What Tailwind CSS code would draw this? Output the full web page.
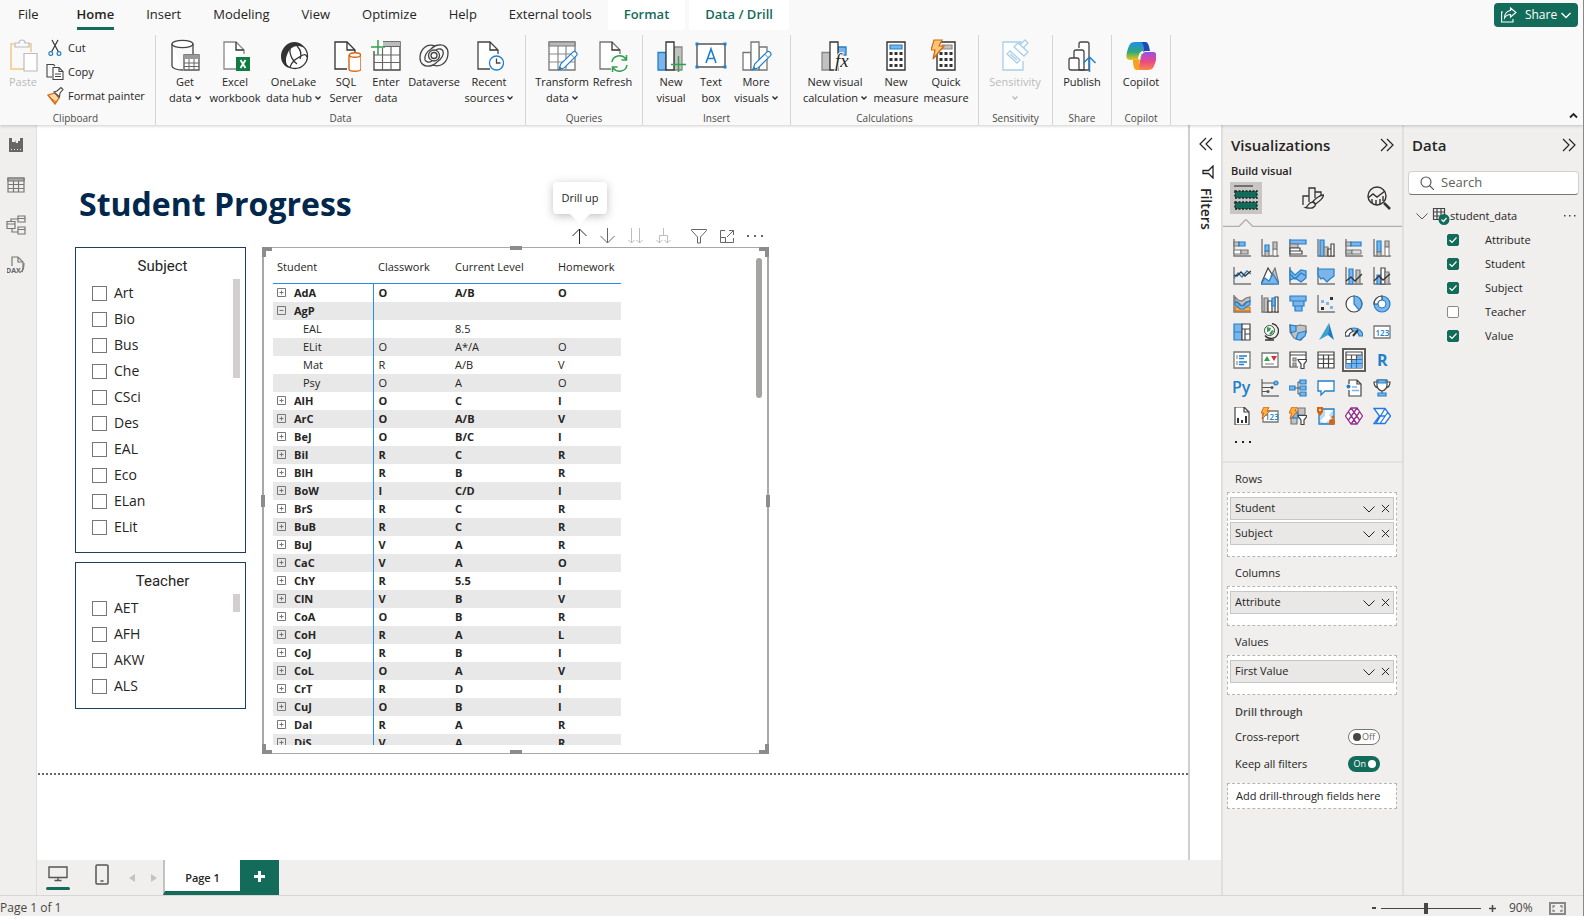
<!DOCTYPE html>
<html lang="en">
<head>
    <meta charset="UTF-8">
    <meta name="viewport" content="width=device-width, initial-scale=1.0">
    <title>Student Progress</title>
    <script src="https://cdn.jsdelivr.net/npm/@tailwindcss/browser@4"></script>
</head>
<body class="h-screen flex flex-col overflow-hidden bg-[#f0efee] font-['Open_Sans','Noto_Sans',sans-serif] text-[11px] text-[#252423] border-r border-[#8a8886]">
    <!-- Shared glyphs -->
    <svg class="hidden">
        <symbol id="chev" viewBox="0 0 12 12"><path d="M0.5 3.5 6 9l5.500-5.500" fill="none" stroke="currentColor" /></symbol>
        <symbol id="cross" viewBox="0 0 10 10"><path d="M1 1l8 8M9 1 1 9" fill="none" stroke="currentColor" stroke-width="1.100" /></symbol>
        <symbol id="caret" viewBox="0 0 6 6"><path d="M0.500 1.500 3 4l2.500-2.500" fill="none" stroke="currentColor" stroke-width="1.300" /></symbol>
        <symbol id="dbl" viewBox="0 0 14 14"><path d="M1 1l6 6-6 6M7 1l6 6-6 6" fill="none" stroke="currentColor" stroke-width="1.200" /></symbol>
        <symbol id="doc" viewBox="0 0 30 32"><path d="M22 16v-4l-8-8H2v27h12" fill="#fff" stroke="currentColor" stroke-width="1.300" /><path d="M14 4v8h8" fill="none" stroke="#333" stroke-width="1.300" /></symbol>
        <symbol id="pencil" viewBox="0 0 22 22"><path d="M1 21l2-6L16 2q2-2 4 0t0 4L7 19z" fill="#fff" stroke="#2180c8" stroke-width="1.300" /><path d="M1 21l1-3 2 2zM14 4l4 4" fill="#2180c8" stroke="#2180c8" /></symbol>
    </svg>

    <!-- Ribbon -->
    <header class="relative z-10 bg-[#f9f9f9] shadow-[0_1px_3px_rgba(0,0,0,0.2)] h-[125px] shrink-0 flex flex-col">
        <nav class="flex items-stretch h-[30px] text-[13px] text-[#252423]">
            <a href="#" class="pl-[18px] pr-[22px] flex items-center">File</a>
            <a href="#" class="px-4 flex items-center font-semibold"><span class="relative h-full flex items-center">Home<span class="absolute inset-x-0 bottom-0 h-[3px] bg-[#136c5a]"></span></span></a>
            <a href="#" class="px-4 flex items-center">Insert</a>
            <a href="#" class="px-4 flex items-center">Modeling</a>
            <a href="#" class="px-4 flex items-center">View</a>
            <a href="#" class="px-4 flex items-center">Optimize</a>
            <a href="#" class="px-4 flex items-center">Help</a>
            <a href="#" class="px-4 flex items-center">External tools</a>
            <a href="#" class="px-4 flex items-center font-semibold text-[#136c5a] bg-white">Format</a>
            <a href="#" class="px-4 ml-1 flex items-center font-semibold text-[#136c5a] bg-white">Data / Drill</a>
            <button class="ml-auto mr-[5px] mt-[3px] h-6 w-[84px] rounded bg-[#136c5a] text-white text-xs flex items-center justify-center gap-2">
                <svg class="w-4 h-4" viewBox="0 0 16 16" fill="none" stroke="currentColor" stroke-width="1.100"><path d="M2 5H.600v10H12v-3" /><path d="M9.500 1l5.500 4.500-5.500 4.500V7.500C7 7.500 5 8.500 3.500 11 3.500 7 6 4 9.500 3.500z" /></svg>
                <span class="flex items-center gap-1">Share<svg class="w-[10px] h-[10px]" viewBox="0 0 10 10"><path d="M.500 3 5 7.500 9.500 3" fill="none" stroke="currentColor" stroke-width="1.300" /></svg></span>
            </button>
        </nav>

        <div class="flex pt-[5px] flex-1 relative">
            <!-- Clipboard -->
            <section class="w-[156px] border-r border-[#d6d5d4] flex flex-col">
                <div class="flex flex-1 -mt-px">
                    <button class="w-[46px] flex flex-col items-center text-[#bab9b8] leading-4" disabled>
                        <svg class="w-[30px] h-10 shrink-0" viewBox="0 0 30 40"><path d="M6 10H3v25h13M19 10h4v8" fill="none" stroke="#f6d3a4" stroke-width="2" /><path d="M7 13V9h4c0-4 6-4 6 0h4v4z" fill="#f9f9f9" stroke="#bbb" stroke-width="1.200" /><path d="M16 19.500h13V37H16z" fill="#fff" stroke="#bbb" stroke-width="1.200" /></svg>
                        Paste
                    </button>
                    <div class="flex flex-col pt-[2px]">
                        <button class="flex items-center h-6 gap-1 text-left">
                            <svg class="w-[18px] h-[18px]" viewBox="0 0 18 18" fill="none"><path d="M6 1l6.500 12M12 1 5.500 13" stroke="#333" stroke-width="1.200" /><circle cx="4.800" cy="14.500" r="1.900" stroke="#2180c8" stroke-width="1.200" /><circle cx="13" cy="14.500" r="1.900" stroke="#2180c8" stroke-width="1.200" /></svg>Cut
                        </button>
                        <button class="flex items-center h-6 gap-1 text-left">
                            <svg class="w-[18px] h-[18px]" viewBox="0 0 18 18" fill="none" stroke="#444" stroke-width="1.100"><path d="M6 14H1V1.500h6.500L9 3" /><path d="M7 4.500h6l4 4v8H7z" fill="#fff" /><path d="M13 4.500v4h4M9 11h6M9 13.500h6" /></svg>Copy
                        </button>
                        <button class="flex items-center h-6 gap-1 text-left">
                            <svg class="w-[18px] h-[18px]" viewBox="0 0 18 18"><path d="M2 8l7-2 4 5-4 6z" fill="#fbd9a5" stroke="#d9640f" stroke-width="1.300" /><path d="M3 10l7 5" stroke="#d9640f" /><path d="M8 5l3-1 4-3.500 2 2L14 6l-.500 4z" fill="#fff" stroke="#444" stroke-width="1.100" /></svg>Format painter
                        </button>
                    </div>
                </div>
                <div class="text-center text-[10px] leading-[14px] text-[#4a4947] -ml-1">Clipboard</div>
            </section>

            <!-- Data -->
            <section class="border-r border-[#d6d5d4] flex flex-col">
                <div class="flex flex-1 leading-4 -mt-px pl-[5px] pr-[9px]">
                    <button class="w-12 flex flex-col items-center whitespace-nowrap">
                        <svg class="w-[30px] h-10 shrink-0" viewBox="0 0 30 40"><path d="M2 10v22c0 2 4 4 11 4M23 20V10" fill="#fff" stroke="#444" stroke-width="1.300" /><ellipse cx="12.500" cy="10" rx="10.500" ry="3.700" fill="#fff" stroke="#444" stroke-width="1.300" /><path d="M14 21h15v15H14z" fill="#fff" stroke="#555" stroke-width="1.300" /><path d="M14 21h15v4H14z" fill="#999" /><path d="M14 29h15M14 32.500h15M19 25v11M24 25v11" stroke="#666" /></svg>
                        Get<span class="flex items-center gap-[3px]">data<svg class="w-[6px] h-[6px]"><use href="#caret" /></svg></span>
                    </button>
                    <button class="w-[52px] flex flex-col items-center whitespace-nowrap">
                        <svg class="w-[30px] h-10 shrink-0 text-[#888]" viewBox="0 0 30 40"><use href="#doc" x="2" y="4" width="30" height="32" /><path d="M16 23h14v14H16z" fill="#107c41" /><path d="M20.500 26l5 8M25.500 26l-5 8" stroke="#fff" stroke-width="1.800" /></svg>
                        Excel<span>workbook</span>
                    </button>
                    <button class="w-[65px] flex flex-col items-center whitespace-nowrap">
                        <svg class="w-[30px] h-10 shrink-0" viewBox="0 0 30 40"><circle cx="16" cy="22" r="12.500" fill="#fff" stroke="#333" stroke-width="1.300" /><path d="M16 8C7 8 2 16 2 22s3 10 8 12c-3-4-4-8-2-13 2-6 6-9 11-9 3 0 5 1 6 2-2-4-5-6-9-6z" fill="#333" /><path d="M11 15c-1 6 3 12 7 15M28 23c-1-3-3-3-6-1-5 3-8 4-11 11M18 12c3 3 5 8 3 13" fill="none" stroke="#333" stroke-width="1.300" /></svg>
                        OneLake<span class="flex items-center gap-[3px]">data hub<svg class="w-[6px] h-[6px]"><use href="#caret" /></svg></span>
                    </button>
                    <button class="w-10 flex flex-col items-center whitespace-nowrap">
                        <svg class="w-[30px] h-10 shrink-0 text-[#333]" viewBox="0 0 30 40"><use href="#doc" x="2" y="4" width="30" height="32" /><path d="M18 21v14c0 3 12 3 12 0V21" fill="#fff" stroke="#d9640f" stroke-width="1.400" /><ellipse cx="24" cy="21" rx="5.500" ry="2.200" fill="#fff" stroke="#d9640f" stroke-width="1.400" /></svg>
                        SQL<span>Server</span>
                    </button>
                    <button class="w-10 flex flex-col items-center whitespace-nowrap">
                        <svg class="w-[30px] h-10 shrink-0" viewBox="0 0 30 40"><path d="M3 17v19h26V8H12" fill="#fff" stroke="#444" stroke-width="1.300" /><path d="M12 8h17v4H12z" fill="#bbb" /><path d="M3 21h26M3 28.500h26M11.500 14v22M20 12v24M12 12.500h17" stroke="#666" stroke-width="1.200" fill="none" /><path d="M7 6v15M0 13h14" stroke="#31a04f" stroke-width="1.500" /></svg>
                        Enter<span>data</span>
                    </button>
                    <button class="w-14 flex flex-col items-center whitespace-nowrap">
                        <svg class="w-[30px] h-10 shrink-0" viewBox="0 0 30 40" fill="none" stroke="#444" stroke-width="1.300"><path d="M16 12C8 9 1 15 1 24c0 6 5 9 9 8 3 0 6-2 8-4" /><path d="M14 31c8 3 15-3 15-12 0-6-5-9-9-8-3 0-6 2-8 4" /><path d="M12 15c-5 3-7 8-6 11 1 2 4 3 7 1M18 28c5-3 7-8 6-11-1-2-4-3-7-1" /><circle cx="15" cy="21.500" r="5.500" /><circle cx="15" cy="21.500" r="3" /></svg>
                        Dataverse
                    </button>
                    <button class="w-[54px] flex flex-col items-center whitespace-nowrap">
                        <svg class="w-[30px] h-10 shrink-0 text-[#444]" viewBox="0 0 30 40"><use href="#doc" x="2" y="4" width="30" height="32" /><circle cx="22.500" cy="29" r="7" fill="#fff" stroke="#2180c8" stroke-width="1.300" /><path d="M22.500 24.500V29h4" fill="none" stroke="#444" stroke-width="1.300" /></svg>
                        Recent<span class="flex items-center gap-[3px]">sources<svg class="w-[6px] h-[6px]"><use href="#caret" /></svg></span>
                    </button>
                </div>
                <div class="text-center text-[10px] leading-[14px] text-[#4a4947]">Data</div>
            </section>

            <!-- Queries -->
            <section class="border-r border-[#d6d5d4] flex flex-col">
                <div class="flex flex-1 leading-4 -mt-px pl-[6px] pr-[9px]">
                    <button class="w-[60px] flex flex-col items-center whitespace-nowrap">
                        <svg class="w-8 h-10 shrink-0" viewBox="0 0 32 40"><path d="M3 8h26v28H3z" fill="#fff" stroke="#777" stroke-width="1.300" /><path d="M3 8h26v4H3z" fill="#bbb" stroke="#777" /><path d="M3 20h26M3 28h26M12 12v24M20 12v24" stroke="#888" stroke-width="1.200" /><use href="#pencil" x="12" y="16" width="20" height="21" /></svg>
                        Transform<span class="flex items-center gap-[3px]">data<svg class="w-[6px] h-[6px]"><use href="#caret" /></svg></span>
                    </button>
                    <button class="w-[41px] flex flex-col items-center whitespace-nowrap">
                        <svg class="w-[30px] h-10 shrink-0 text-[#777]" viewBox="0 0 30 40"><use href="#doc" y="4" width="30" height="32" /><path d="M13 21h17v17H13z" fill="#f9f9f9" /><path d="M14 28c1-7 10-8 14-3M28.500 21v5h-5M29 31c-1 7-10 8-14 3M14.500 38v-5h5" fill="none" stroke="#31a04f" stroke-width="1.500" /></svg>
                        Refresh
                    </button>
                </div>
                <div class="text-center text-[10px] leading-[14px] text-[#4a4947]">Queries</div>
            </section>

            <!-- Insert -->
            <section class="border-r border-[#d6d5d4] flex flex-col">
                <div class="flex flex-1 leading-4 -mt-px pl-2 pr-[9px]">
                    <button class="w-10 flex flex-col items-center whitespace-nowrap">
                        <svg class="w-[30px] h-10 shrink-0" viewBox="0 0 30 40"><path d="M2 18.500h8V36H2z" fill="#7db5ea" stroke="#2180c8" stroke-width="1.300" /><path d="M18 13h8v23h-8z" fill="#c4c2c0" stroke="#888" stroke-width="1.300" /><path d="M10 8h8v28h-8z" fill="#fff" stroke="#333" stroke-width="1.300" /><path d="M22.500 22v16M15 30.500h15" stroke="#31a04f" stroke-width="1.500" /></svg>
                        New<span>visual</span>
                    </button>
                    <button class="w-10 flex flex-col items-center whitespace-nowrap">
                        <svg class="w-8 h-10 shrink-0" viewBox="0 0 32 40"><path d="M2 10h28v23H2z" fill="#fff" stroke="#555" stroke-width="1.400" /><path d="M.500 8.500h3v3h-3zM28.500 8.500h3v3h-3zM.500 31.500h3v3h-3zM28.500 31.500h3v3h-3z" fill="#2180c8" /><path d="M11 29l5-14 5 14M12.500 24.500h7" fill="none" stroke="#2180c8" stroke-width="1.600" /></svg>
                        Text<span>box</span>
                    </button>
                    <button class="w-[50px] flex flex-col items-center whitespace-nowrap">
                        <svg class="w-8 h-10 shrink-0" viewBox="0 0 32 40"><path d="M3 18.500h8V36H3zM19 13h8v23h-8z" fill="#fff" stroke="#777" stroke-width="1.300" /><path d="M11 8h8v28h-8z" fill="#fff" stroke="#777" stroke-width="1.300" /><use href="#pencil" x="12" y="16" width="20" height="21" /></svg>
                        More<span class="flex items-center gap-[3px]">visuals<svg class="w-[6px] h-[6px]"><use href="#caret" /></svg></span>
                    </button>
                </div>
                <div class="text-center text-[10px] leading-[14px] text-[#4a4947]">Insert</div>
            </section>

            <!-- Calculations -->
            <section class="border-r border-[#d6d5d4] flex flex-col">
                <div class="flex flex-1 leading-4 -mt-px pl-[9px] pr-2">
                    <button class="w-[70px] flex flex-col items-center whitespace-nowrap">
                        <svg class="w-[30px] h-10 shrink-0" viewBox="0 0 30 40"><path d="M2 18.500h8V36H2z" fill="#c4c2c0" stroke="#888" stroke-width="1.300" /><path d="M18 13h8v8h-8z" fill="#7db5ea" stroke="#2180c8" stroke-width="1.300" /><path d="M10 8h8v28h-8z" fill="#fff" stroke="#333" stroke-width="1.300" /><text x="15" y="33" font-size="19" font-style="italic" font-family="Liberation Serif" fill="#252423" stroke="#fff" stroke-width="2" paint-order="stroke">fx</text></svg>
                        New visual<span class="flex items-center gap-[3px]">calculation<svg class="w-[6px] h-[6px]"><use href="#caret" /></svg></span>
                    </button>
                    <button class="w-[52px] flex flex-col items-center whitespace-nowrap">
                        <svg class="w-[30px] h-10 shrink-0" viewBox="0 0 30 40"><path d="M6 8h18v28H6z" fill="#fff" stroke="#333" stroke-width="1.400" /><path d="M9 11h12v4H9z" fill="#7db5ea" stroke="#2180c8" stroke-width="1.200" /><path d="M8.500 19.500h13M8.500 25.500h13M8.500 31.500h13" stroke="#333" stroke-width="3" stroke-dasharray="3 2" /></svg>
                        New<span>measure</span>
                    </button>
                    <button class="w-12 flex flex-col items-center whitespace-nowrap">
                        <svg class="w-[30px] h-10 shrink-0" viewBox="0 0 30 40"><path d="M6 8h18v28H6z" fill="#fff" stroke="#333" stroke-width="1.400" /><path d="M11 11h10v4H11z" fill="#c4c2c0" stroke="#888" stroke-width="1.200" /><path d="M8.500 19.500h13M8.500 25.500h13M8.500 31.500h13" stroke="#333" stroke-width="3" stroke-dasharray="3 2" /><path d="M3 6h8l-3 6h5L2 25l2-9H0z" fill="#fbc775" stroke="#d9640f" stroke-width="1.200" /></svg>
                        Quick<span>measure</span>
                    </button>
                </div>
                <div class="text-center text-[10px] leading-[14px] text-[#4a4947]">Calculations</div>
            </section>

            <!-- Sensitivity -->
            <section class="border-r border-[#d6d5d4] flex flex-col">
                <div class="flex flex-1 leading-4 -mt-px pl-[6px] pr-[7px]">
                    <button class="w-[60px] flex flex-col items-center text-[#bab9b8]" disabled>
                        <svg class="w-[30px] h-10 shrink-0" viewBox="0 0 30 40" fill="#fff" stroke="#a8d0ea" stroke-width="1.300"><path d="M21 18V8H3v28h20V27" /><path d="M7 20l3-3 10 9-3 3zM10 20l7 6" /><path d="M14 13l4-4 10 9-4 4zM18 9l3 1 4-4 3 3-4 4 1 3" /></svg>
                        Sensitivity<svg class="w-[6px] h-[6px] mt-[5px]"><use href="#caret" /></svg>
                    </button>
                </div>
                <div class="text-center text-[10px] leading-[14px] text-[#4a4947]">Sensitivity</div>
            </section>

            <!-- Share -->
            <section class="border-r border-[#d6d5d4] flex flex-col">
                <div class="flex flex-1 leading-4 -mt-px px-1">
                    <button class="w-[50px] flex flex-col items-center">
                        <svg class="w-[30px] h-10 shrink-0" viewBox="0 0 30 40" fill="#fff" stroke="#444" stroke-width="1.300"><path d="M12 14v-4q0-2 2-2h6q2 0 2 2v26H12" /><path d="M7 24v-6q0-2 2-2h6q2 0 2 2v18" /><path d="M2 26q0-2 2-2h6q2 0 2 2v10H4q-2 0-2-2zM12 36h6" /><path d="M22.500 38V23M16.500 29l6-6 6 6" fill="none" stroke="#2180c8" stroke-width="1.500" /></svg>
                        Publish
                    </button>
                </div>
                <div class="text-center text-[10px] leading-[14px] text-[#4a4947]">Share</div>
            </section>

            <!-- Copilot -->
            <section class="border-r border-[#d6d5d4] flex flex-col">
                <div class="flex flex-1 leading-4 -mt-px px-1">
                    <button class="w-[50px] flex flex-col items-center">
                        <svg class="w-[30px] h-10 shrink-0" viewBox="0 0 30 40">
                            <defs>
                                <linearGradient id="cpA" x1="0" y1="0" x2="0" y2="1"><stop offset="0" stop-color="#1f8df0" /><stop offset=".55" stop-color="#2fa878" /><stop offset="1" stop-color="#f0c419" /></linearGradient>
                                <linearGradient id="cpB" x1="0" y1="0" x2="0" y2="1"><stop offset="0" stop-color="#9a4fe8" /><stop offset=".55" stop-color="#ec4a84" /><stop offset="1" stop-color="#f9894a" /></linearGradient>
                            </defs>
                            <path d="M14 8h8c-4 0-4 5-5 9-2 8-3 9-7 9H4c-4 0-4-4-3-8 2-7 3-10 8-10z" fill="url(#cpA)" />
                            <path d="M16 36H9c4 0 4-5 5-9 2-8 3-9 7-9h6c4 0 4 4 3 8-2 7-3 10-8 10z" fill="url(#cpB)" />
                            <path d="M14 8h5c3 0 4 3 5 9h-3c-2 0-3 0-4 1 1-4 1-10-3-10z" fill="#1b49b8" />
                            <path d="M16 36h-5c-3 0-4-4-4-10h3c2 0 3 0 4-1-1 4-2 11 2 11z" fill="#f7a21b" />
                            <path d="M17 18q-3 0-4 7" fill="none" stroke="#fff" stroke-width="2" />
                        </svg>
                        Copilot
                    </button>
                </div>
                <div class="text-center text-[10px] leading-[14px] text-[#4a4947]">Copilot</div>
            </section>
            <button class="ml-auto self-end mr-[5px] mb-[5px]" aria-label="Collapse ribbon"><svg class="w-[9px] h-[9px]" viewBox="0 0 9 9"><path d="M1 6.500 4.500 3 8 6.500" fill="none" stroke="#252423" stroke-width="1.800" /></svg></button>
        </div>
    </header>

    <div class="flex flex-1 min-h-0">
        <!-- View switcher -->
        <nav class="w-[37px] shrink-0 border-r border-[#e1dfdd] flex flex-col text-[#777]">
            <button class="h-10 flex items-center justify-center pr-1" aria-label="Report view"><svg class="w-4 h-4" viewBox="0 0 16 16"><path d="M1 1h3v4h3V3l1 3h2V4h2V1h3v14H1z" fill="#666" /><path d="M3 12.500h10" stroke="#f0efee" stroke-dasharray="1 2" /></svg></button>
            <button class="h-10 flex items-center justify-center pr-1" aria-label="Table view"><svg class="w-[18px] h-[18px]" viewBox="0 0 18 18" fill="none" stroke="currentColor" stroke-width="1.200"><path d="M1 2h16v14H1z" /><path d="M1 2h16v3H1z" fill="#aaa" /><path d="M1 8.500h16M1 12.500h16M6.500 5v11M11.500 5v11" /></svg></button>
            <button class="h-10 flex items-center justify-center pr-1" aria-label="Model view"><svg class="w-5 h-5" viewBox="0 0 20 20" fill="none" stroke="currentColor" stroke-width="1.200"><path d="M1 6.500h8v7H1zM1 9h8M12 1h7v6h-7zM12 3.500h7M12 12h7v7h-7zM12 14.500h7M5 6.500V4h7M6 13.500V17h6" /></svg></button>
            <button class="h-10 flex items-center justify-center pr-1" aria-label="DAX query view"><svg class="w-[18px] h-[18px]" viewBox="0 0 18 18" fill="none" stroke="currentColor" stroke-width="1.200"><path d="M5 10V1h6l5 5v6l-1 4" /><path d="M11 1v5h5M13 16q4 0 4-9" /><text x="-1" y="17" font-size="7" font-weight="700" fill="#666" stroke="none">DAX</text></svg></button>
        </nav>

        <div class="flex-1 min-w-0 flex flex-col">
            <div class="flex-1 min-h-0 flex">
                <!-- Report canvas -->
                <main class="flex-1 min-w-0 bg-white flex flex-col">
                    <h1 class="pl-[42px] pt-[55px] h-[122px] text-[32px] leading-[48px] font-bold text-[#00274c]">Student Progress</h1>
                    <div class="flex items-start gap-4 pl-[38px]">
                        <div class="w-[171px] flex flex-col gap-[9px]">
                            <fieldset class="h-[306px] border border-[#1c3f60] pt-[7px] relative">
                                <h2 class="text-center text-[15px] leading-[22px] pl-1 font-['Roboto',sans-serif]">Subject</h2>
                                <ul id="subjectList" class="pl-4 pt-[3px]"></ul>
                                <span class="absolute right-[5px] top-[31px] w-[7px] h-[99px] bg-[#d2cfce]"></span>
                            </fieldset>
                            <fieldset class="h-[147px] border border-[#1c3f60] pt-[7px] relative">
                                <h2 class="text-center text-[15px] leading-[22px] pl-1 font-['Roboto',sans-serif]">Teacher</h2>
                                <ul id="teacherList" class="pl-4 pt-[3px]"></ul>
                                <span class="absolute right-[5px] top-[31px] w-[7px] h-[18px] bg-[#d2cfce]"></span>
                            </fieldset>
                        </div>

                        <!-- Matrix visual -->
                        <div class="relative w-[507px] h-[507px] border border-l-2 border-r-2 border-[#a8a8a8] pl-[9px] pt-[10px]">
                            <span class="absolute -left-[2px] -top-[1px] size-[10px] border-l-4 border-t-4 border-[#8c8c8c]"></span>
                            <span class="absolute -right-[2px] -top-[1px] size-[10px] border-r-4 border-t-4 border-[#8c8c8c]"></span>
                            <span class="absolute -left-[2px] -bottom-[1px] size-[10px] border-l-4 border-b-4 border-[#8c8c8c]"></span>
                            <span class="absolute -right-[2px] -bottom-[1px] size-[10px] border-r-4 border-b-4 border-[#8c8c8c]"></span>
                            <span class="absolute left-1/2 -translate-x-1/2 -top-[2px] w-3 h-1 bg-[#8c8c8c]"></span>
                            <span class="absolute left-1/2 -translate-x-1/2 -bottom-[1px] w-3 h-1 bg-[#8c8c8c]"></span>
                            <span class="absolute top-1/2 -translate-y-1/2 -left-[3px] h-3 w-1 bg-[#8c8c8c]"></span>
                            <span class="absolute top-1/2 -translate-y-1/2 -right-[3px] h-3 w-1 bg-[#8c8c8c]"></span>
                            <span class="absolute right-[5px] top-[10px] w-[6px] h-[140px] rounded-full bg-[#a5a4a3]"></span>

                            <!-- Visual header -->
                            <div class="absolute right-1 bottom-full h-6 flex items-center gap-3 text-[#666]">
                                <button aria-label="Drill up" class="text-[#252423]"><svg class="w-4 h-4" viewBox="0 0 16 16" fill="none" stroke="currentColor"><path d="M8.500 16V1M1.500 8l7-7 7 7" /></svg></button>
                                <button aria-label="Drill down"><svg class="w-4 h-4" viewBox="0 0 16 16" fill="none" stroke="currentColor"><path d="M8.500 0v15M1.500 8l7 7 7-7" /></svg></button>
                                <button aria-label="Go to the next level" class="text-[#c0bebc]"><svg class="w-4 h-4" viewBox="0 0 16 16" fill="none" stroke="currentColor"><path d="M4.500 0v15M1.500 12l3 3 3-3M12.500 0v15M9.500 12l3 3 3-3" /></svg></button>
                                <button aria-label="Expand all down one level" class="text-[#c0bebc]"><svg class="w-4 h-4" viewBox="0 0 16 16" fill="none" stroke="currentColor"><path d="M8.500 0v7M4.500 15V7.500h8V15M1.500 12l3 3 3-3M9.500 12l3 3 3-3" /></svg></button>
                                <button aria-label="Filters on visual" class="ml-2"><svg class="w-4 h-4" viewBox="0 0 16 16" fill="none" stroke="currentColor"><path d="M.500 1.500h15v1L9.500 9v6h-3V9L.500 2.500z" /></svg></button>
                                <button aria-label="Focus mode"><svg class="w-4 h-4" viewBox="0 0 16 16" fill="none" stroke="currentColor"><path d="M6 2.500H1.500v12h13V10M10 2.500h4.500V7M14.500 2.500 8 9M1.500 9.500h5v5" /></svg></button>
                                <button aria-label="More options"><svg class="w-4 h-4" viewBox="0 0 16 16" fill="currentColor"><path d="M0 7h2v2H0zM7 7h2v2H7zM14 7h2v2h-2z" /></svg></button>
                            </div>
                            <div role="tooltip" class="absolute right-[160px] bottom-[539px] w-[54px] h-8 bg-white rounded-sm shadow-[0_2px_10px_rgba(0,0,0,0.25)] flex items-center justify-center whitespace-nowrap">
                                <svg class="absolute top-full left-[17px] w-5 h-[10px]" viewBox="0 0 20 10"><path d="M0 0h20L10 10z" fill="#fff" /></svg>
                                Drill up
                            </div>

                            <div class="h-[487px] overflow-hidden">
                                <table class="w-[348px] table-fixed border-collapse text-left leading-[18px]">
                                    <thead>
                                        <tr class="h-[25px] border-b border-[#2b8cf0] align-top">
                                            <th class="w-[100px] pl-1 font-normal">Student</th>
                                            <th class="w-[77px] pl-[5px] font-normal">Classwork</th>
                                            <th class="w-[103px] pl-[5px] font-normal">Current Level</th>
                                            <th class="pl-[5px] font-normal">Homework</th>
                                        </tr>
                                    </thead>
                                    <tbody id="matrixBody"></tbody>
                                </table>
                            </div>
                        </div>
                    </div>
                    <div class="mt-[19px] ml-[1px] border-t-2 border-dotted border-[#666]"></div>
                </main>

                <!-- Filters pane (collapsed) -->
                <aside class="w-[33px] shrink-0 bg-white border-l-2 border-[#d2cecd] flex flex-col items-center gap-[14px] pt-3">
                    <button aria-label="Expand filters"><svg class="w-[14px] h-[14px] rotate-180"><use href="#dbl" /></svg></button>
                    <svg class="ml-1 w-3 h-[14px] shrink-0" viewBox="0 0 12 14" fill="none" stroke="#252423" stroke-width="1.300"><path d="M11 1v12L6.500 8.500H1v-3h5.500z" /></svg>
                    <h2 class="[writing-mode:vertical-rl] text-sm font-semibold leading-5 -mt-[5px]">Filters</h2>
                </aside>
            </div>

            <!-- Page tabs -->
            <div class="h-[35px] shrink-0 flex items-stretch text-[11px]">
                <button class="ml-[9px] w-6 flex flex-col items-center justify-between pt-[6px] pb-[5px]" aria-label="Desktop layout">
                    <svg class="w-5 h-4" viewBox="0 0 20 16" fill="none" stroke="#555" stroke-width="1.400"><path d="M1 1h18v10.500H1zM10 11v3M6.500 14.500h7" /></svg>
                    <span class="w-6 h-[3px] rounded bg-[#136c5a]"></span>
                </button>
                <button class="ml-6 w-4 flex justify-center pt-1" aria-label="Phone layout"><svg class="w-[14px] h-[21px]" viewBox="0 0 14 21" fill="none" stroke="#555" stroke-width="1.500"><rect x="1" y="1" width="12" height="19" rx="1" /><path d="M5.500 17h3" /></svg></button>
                <button class="ml-4 w-3 flex items-center justify-center" aria-label="Previous page"><svg class="w-[6px] h-2" viewBox="0 0 6 8"><path d="M6 0v8L0 4z" fill="#c4c2c0" /></svg></button>
                <button class="ml-[10px] w-3 flex items-center justify-center" aria-label="Next page"><svg class="w-[6px] h-2" viewBox="0 0 6 8"><path d="M0 0v8l6-4z" fill="#c4c2c0" /></svg></button>
                <button class="ml-[3px] w-[77px] bg-white border-l-2 border-l-[#c4c2c0] border-b-4 border-b-[#136c5a] pt-[6px] font-semibold">Page 1</button>
                <button class="w-[39px] bg-[#136c5a] flex items-center justify-center pb-[2px]" aria-label="New page"><svg class="w-[11px] h-[11px]" viewBox="0 0 11 11"><path d="M5.500 0v11M0 5.500h11" stroke="#fff" stroke-width="3" /></svg></button>
            </div>
        </div>

        <!-- Visualizations pane -->
        <aside class="w-[181px] shrink-0 border-l-2 border-[#e1dfdd]">
            <div class="flex items-center justify-between pl-2 pr-2 pt-2">
                <h2 class="text-[15px] leading-6 font-semibold">Visualizations</h2>
                <button aria-label="Collapse visualizations"><svg class="w-[14px] h-[14px]"><use href="#dbl" /></svg></button>
            </div>
            <p class="pl-2 pt-1 leading-5 font-semibold">Build visual</p>
            <div class="flex items-center px-[7px] h-8 mt-px gap-[35px]">
                <button class="size-8 bg-[#c8c6c4] flex items-center justify-center" aria-label="Build visual"><svg class="w-6 h-[26px]" viewBox="0 0 24 26"><path d="M0 1h19" stroke="#555" stroke-width="1.500" /><path d="M1 6h22v7H1zM1 17h22v7H1z" fill="#136c5a" stroke="#222" stroke-width="1.500" stroke-dasharray="2 1.500" /></svg></button>
                <button class="size-8 flex items-center justify-center" aria-label="Format visual"><svg class="w-[22px] h-[22px]" viewBox="0 0 22 22" fill="none" stroke="#333" stroke-width="1.300"><path d="M1 18V9h6M7 15V1h6v10M13 5h6v3" /><path d="M21.500 8c0 3-5 7-8 9l-2.500-2.500C13 12 18 8 21.500 8z" fill="#f0efee" /><path d="M11 15l2.500 2.500c-1 4-6 4-10 3 3-1 2-5 7.500-5.500z" fill="#f0efee" /></svg></button>
                <button class="size-8 flex items-center justify-center" aria-label="Analytics"><svg class="w-6 h-6" viewBox="0 0 24 24" fill="none" stroke="#333" stroke-width="1.400"><circle cx="10" cy="10" r="9" /><path d="M1 12l5-4 4 3 8-6M5 17v-4M9 19v-5M13 18v-5M16 15v-5" /><path d="M17 17l6 6" stroke-width="2.500" /></svg></button>
            </div>
            <svg class="block h-2 w-full mt-[5px]" viewBox="0 0 180 8" preserveAspectRatio="none"><path d="M0 7.500h16l7-7 7 7h150" fill="none" stroke="#b0aeac" stroke-width="1.300" /></svg>
            <div id="vizGrid" class="grid grid-cols-6 w-[168px] ml-[5px] mt-[7px]"></div>
            <button class="block pl-[11px] h-6" aria-label="Get more visuals"><svg class="w-[18px] h-1" viewBox="0 0 18 4"><path d="M1 1h2v2H1zM8 1h2v2H8zM15 1h2v2h-2z" fill="#252423" /></svg></button>

            <!-- Field wells -->
            <div class="border-t-2 border-[#e4e2e1] pl-1 pr-1 mt-[7px]">
                <div id="fieldWells"></div>
                <h3 class="pl-2 mt-[7px] leading-5 font-semibold text-[#484644]">Drill through</h3>
                <label class="pl-2 pr-[18px] mt-1 h-[22px] flex items-center justify-between">Cross-report
                    <input type="checkbox" class="sr-only">
                    <span class="w-8 h-4 shrink-0 rounded-full border border-[#777] bg-white flex items-center gap-[1px] pl-1 text-[9px] text-[#666]"><span class="size-2 rounded-full bg-[#484644]"></span>Off</span>
                </label>
                <label class="pl-2 pr-[18px] mt-[5px] h-[22px] flex items-center justify-between">Keep all filters
                    <input type="checkbox" checked class="sr-only">
                    <span class="w-8 h-4 shrink-0 rounded-full bg-[#136c5a] flex items-center justify-end gap-[2px] pr-1 text-[9px] text-white">On<span class="size-2 rounded-full bg-white"></span></span>
                </label>
                <div class="mt-2 h-[26px] mr-px border border-dashed border-[#b8b6b4] bg-white flex items-center pl-2 whitespace-nowrap">Add drill-through fields here</div>
            </div>
        </aside>

        <!-- Data pane -->
        <aside class="w-[181px] shrink-0 border-l-2 border-[#e1dfdd]">
            <div class="flex items-center justify-between pl-2 pr-[7px] pt-2">
                <h2 class="text-[15px] leading-6 font-semibold">Data</h2>
                <button aria-label="Collapse data"><svg class="w-[14px] h-[14px]"><use href="#dbl" /></svg></button>
            </div>
            <label class="mx-1 mt-[14px] h-6 rounded bg-white border border-[#d2d0ce] border-b-[#777] flex items-center gap-[7px] pl-[11px]">
                <svg class="w-[14px] h-[14px] shrink-0" viewBox="0 0 14 14" fill="none" stroke="#555" stroke-width="1.100"><circle cx="6" cy="6" r="5" /><path d="M9.500 9.500 14 14" /></svg>
                <input type="search" placeholder="Search" aria-label="Search" class="w-full min-w-0 text-[13px] outline-none placeholder:text-[#605e5c]">
            </label>
            <div class="flex items-center h-6 mt-[9px] pl-3 pr-[7px]">
                <svg class="w-3 h-3 text-[#555]"><use href="#chev" /></svg>
                <svg class="w-[18px] h-[18px] ml-1 shrink-0" viewBox="0 0 18 18" fill="none"><path d="M1.500 1.500h11v11h-11zM1.500 5h11M1.500 9h11M5 1.500v11M9 1.500v11" stroke="#444" stroke-width="1.200" /><circle cx="12" cy="12.500" r="5.500" fill="#136c5a" /><path d="M9.500 12.500l2 2 3-3.500" stroke="#fff" stroke-width="1.200" /></svg>
                <span>student_data</span>
                <svg class="w-3 h-1 ml-auto" viewBox="0 0 12 4"><path d="M0 1h1.500v1.500H0zM5 1h1.500v1.500H5zM10 1h1.500v1.500H10z" fill="#444" /></svg>
            </div>
            <ul id="fieldList" class="pl-[43px]"></ul>
        </aside>
    </div>

    <!-- Status bar -->
    <footer class="h-[21px] shrink-0 border-t border-[#d8d6d5] flex items-center text-xs text-[#484644] pt-1">
        <span>Page 1 of 1</span>
        <div class="ml-auto flex items-center pr-[17px]">
            <button class="w-[7px] h-4 flex items-center justify-center" aria-label="Zoom out"><svg class="w-1 h-[2px]"><rect width="4" height="2" fill="#484644" /></svg></button>
            <input type="range" aria-label="Zoom" min="10" max="190" value="90" class="appearance-none w-[100px] mx-1 h-4 bg-transparent [&::-webkit-slider-runnable-track]:h-px [&::-webkit-slider-runnable-track]:bg-[#484644] [&::-webkit-slider-thumb]:appearance-none [&::-webkit-slider-thumb]:w-1 [&::-webkit-slider-thumb]:h-[11px] [&::-webkit-slider-thumb]:-mt-[5px] [&::-webkit-slider-thumb]:bg-[#484644]">
            <button class="w-[14px] h-4 flex items-center justify-center" aria-label="Zoom in"><svg class="w-[9px] h-[9px]" viewBox="0 0 9 9"><path d="M4.500 1v7M1 4.500h7" stroke="#484644" stroke-width="1.500" /></svg></button>
            <span class="w-10 pl-[10px]">90%</span>
            <button class="ml-[10px]" aria-label="Fit to page"><svg class="w-[17px] h-[13px]" viewBox="0 0 17 13" fill="none" stroke="#8a8886"><path d="M1 1h15v11H1z" stroke-width="2" /><path d="M4 6V4h2M11 4h2v2M13 7.500V9h-2M6 9H4V7.500" stroke-width="1.300" /></svg></button>
        </div>
    </footer>

    <script>
        // Slicers
        function slicer(id, names) {
            document.getElementById(id).innerHTML = names.map(name => `
                <li class="h-[26px]"><label class="h-full flex items-center gap-[7px] text-sm">
                    <input type="checkbox" class="appearance-none size-[15px] border border-[#777] bg-white">${name}
                </label></li>
            `).join('');
        }
        slicer('subjectList', ['Art', 'Bio', 'Bus', 'Che', 'CSci', 'Des', 'EAL', 'Eco', 'ELan', 'ELit']);
        slicer('teacherList', ['AET', 'AFH', 'AKW', 'ALS']);

        // Matrix rows: state (+ collapsed, - expanded, empty for a child), name, values
        const rows = [
            ['+', 'AdA', 'O', 'A/B', 'O'], ['-', 'AgP', '', '', ''],
            ['', 'EAL', '', '8.5', ''], ['', 'ELit', 'O', 'A*/A', 'O'], ['', 'Mat', 'R', 'A/B', 'V'], ['', 'Psy', 'O', 'A', 'O'],
            ['+', 'AlH', 'O', 'C', 'I'], ['+', 'ArC', 'O', 'A/B', 'V'], ['+', 'BeJ', 'O', 'B/C', 'I'], ['+', 'BiI', 'R', 'C', 'R'],
            ['+', 'BlH', 'R', 'B', 'R'], ['+', 'BoW', 'I', 'C/D', 'I'], ['+', 'BrS', 'R', 'C', 'R'], ['+', 'BuB', 'R', 'C', 'R'],
            ['+', 'BuJ', 'V', 'A', 'R'], ['+', 'CaC', 'V', 'A', 'O'], ['+', 'ChY', 'R', '5.5', 'I'], ['+', 'ClN', 'V', 'B', 'V'],
            ['+', 'CoA', 'O', 'B', 'R'], ['+', 'CoH', 'R', 'A', 'L'], ['+', 'CoJ', 'R', 'B', 'I'], ['+', 'CoL', 'O', 'A', 'V'],
            ['+', 'CrT', 'R', 'D', 'I'], ['+', 'CuJ', 'O', 'B', 'I'], ['+', 'DaI', 'R', 'A', 'R'], ['+', 'DiS', 'V', 'A', 'R']
        ];
        document.getElementById('matrixBody').innerHTML = rows.map(([state, name, ...values]) => {
            const box = state ? `<button class="mr-2" aria-label="Toggle ${name}"><svg class="w-[9px] h-[9px] block" viewBox="0 0 9 9"><path d="M.5.5h8v8h-8zM2.500 4.500h4${state === '+' ? 'M4.500 2.500v4' : ''}" fill="none" stroke="#777" /></svg></button>` : '';
            return `<tr class="h-[18px] even:bg-[#e8e8e8] ${state ? 'font-bold' : ''}">
                <th class="p-0 border-r border-[#2b8cf0] ${state ? 'font-bold' : 'font-normal'}"><span class="flex items-center ${state ? 'pl-1' : 'pl-[30px]'}">${box}${name}</span></th>
                ${values.map(v => `<td class="p-0 pl-[5px]">${v}</td>`).join('')}
            </tr>`;
        }).join('');

        // Visual type icons, 18x18 each
        const axis = '<path d="M1 0v17h17" stroke="#777" stroke-width="1.400" fill="none"/>';
        const b = 'fill="#7db5ea" stroke="#2180c8" stroke-width="1.200"';
        const g = 'fill="#c4c2c0" stroke="#777" stroke-width="1.200"';
        const w = 'fill="#fff" stroke="#444" stroke-width="1.200"';
        const ln = 'fill="none" stroke="#333" stroke-width="1.300"';
        const bolt = '<path d="M3 0h5L6 4h3L1 12l1.500-6H0z" fill="#fbb040" stroke="#d9640f"/>';
        const funnel = '<path d="M9 8.500h8.500V10L15 13v4.500h-3V13L9.500 10z" fill="#fff" stroke="#444" stroke-width="1.200"/>';
        const visuals = [
            ['Stacked bar chart', axis + `<path d="M1 3h5v4H1z" ${g}/><path d="M6 3h6v4H6z" ${b}/><path d="M1 11h7v4H1z" fill="#fff" stroke="#777"/><path d="M8 11h7v4H8z" ${g}/>`],
            ['Stacked column chart', axis + `<path d="M4 12h4v5H4z" ${g}/><path d="M4 6h4v6H4z" ${b}/><path d="M12 10h4v7h-4z" fill="#fff" stroke="#777"/><path d="M12 3h4v7h-4z" ${g}/>`],
            ['Clustered bar chart', axis + `<path d="M1 1h16v4H1z" ${b}/><path d="M1 5h8v4H1z" ${g}/><path d="M1 9h10v3H1zM1 12h12v3H1z" ${w}/>`],
            ['Clustered column chart', axis + `<path d="M3 1h4v16H3z" ${b}/><path d="M7 8h4v9H7z" ${g}/><path d="M11 10h3v7h-3zM14 5h3v12h-3z" ${w}/>`],
            ['100% stacked bar chart', axis + `<path d="M1 3h5v4H1zM1 11h6v4H1z" ${g}/><path d="M6 3h10v4H6z" ${b}/><path d="M7 11h9v4H7z" fill="#ddd" stroke="#777"/>`],
            ['100% stacked column chart', axis + `<path d="M4 2h4v11H4z" ${b}/><path d="M4 13h4v4H4zM12 2h4v6h-4z" ${g}/><path d="M12 8h4v9h-4z" fill="#fff" stroke="#777"/>`],
            ['Line chart', axis + `<path d="M1 11l4-5 4 4 5-6 4 3" fill="none" stroke="#2180c8" stroke-width="1.300"/><path d="M1 8l3 1 4-4 4 4 6-5" ${ln}/>`],
            ['Area chart', `<path d="M0 17 7 1l5 8v8z" ${w}/><path d="M10 9l4-8 4 16h-6z" ${g}/><path d="M0 17l4-6 4 3 4-7 6 10z" ${b}/>`],
            ['Stacked area chart', axis + `<path d="M1 3l5 5 6-5 5 1v7l-5 4-6-4-5 2z" ${b}/><path d="M1 7l5 5 6-6 5 3" fill="none" stroke="#2180c8" stroke-width="1.300"/>`],
            ['100% stacked area chart', axis + `<path d="M1 2h16v7l-4 3-3 3-4-4-2 1-3-4z" ${b}/>`],
            ['Line and stacked column chart', axis + `<path d="M4 2h4v15H4z" ${b}/><path d="M11 3h4v14h-4z" ${g}/><path d="M1 14l5-4 4 4 7-7" ${ln}/>`],
            ['Line and clustered column chart', axis + `<path d="M4 8h4v9H4z" ${b}/><path d="M8 1h4v16H8z" ${w}/><path d="M12 5h4v12h-4z" ${g}/><path d="M1 14l5-5 4 4 7-6" ${ln}/>`],
            ['Ribbon chart', axis + `<path d="M2 12h3l4-3 4 3h4v4H2z" fill="#fbb040" stroke="#d9640f"/><path d="M2 2l3 3 4 1 4-3 4-1v4l-4 1-4 4-4-4-3-1z" ${g}/><path d="M2 7l3 1c2 4 6 4 8 0l4-2v4l-4 2c-2 3-6 3-8 0l-3-2z" ${b}/>`],
            ['Waterfall chart', axis + `<path d="M3 3h4v14H3z" ${g}/><path d="M7 6h4v11H7zM14 2h3v15h-3z" ${w}/><path d="M11 3h3v8h-3z" ${b}/>`],
            ['Funnel chart', `<path d="M1 1h16v5H1zM4 6h11v5H4zM6 11h7v5H6z" ${b}/>`],
            ['Scatter chart', axis + `<path d="M13 2h3v3h-3zM4 12h3v3H4z" fill="#333"/><path d="M4 5h3v3H4zM9 7h3v3H9zM13 11h3v3h-3z" fill="#7db5ea"/>`],
            ['Pie chart', `<circle cx="9" cy="9" r="8" ${w}/><path d="M9 1a8 8 0 0 1 5 14L9 9z" ${b}/>`],
            ['Donut chart', `<circle cx="9" cy="9" r="8" ${b}/><path d="M9 1a8 8 0 0 0-8 8h4a4 4 0 0 1 4-4z" ${w}/><circle cx="9" cy="9" r="4" fill="#fff" stroke="#2180c8"/>`],
            ['Treemap', `<path d="M1 1h8v16H1z" ${b}/><path d="M1 9h8" stroke="#2180c8"/><path d="M9 1h8v16H9zM9 6h8M12 6v11M12 11h5" ${w}/>`],
            ['Map', `<circle cx="8.500" cy="7.500" r="5" fill="#fff" stroke="#444"/><path d="M6 4l4 1-1 3-3 1zM11 7l2 1-3 4-2-1z" fill="#31a04f"/><path d="M11 .500a7.500 7.500 0 1 1-7 12M9 15v2M4 17h9" ${ln}/>`],
            ['Filled map', `<path d="M1 2l6 1 4-1 6 1v7l-5 7-7-2-4-6z" ${g}/><path d="M1 2l6 1v5l-5 2zM9 10l8-2-1 5-5 4-4-1z" ${b}/>`],
            ['Azure map', `<path d="M12 0 2 17l9-5z" fill="#3aa0cf"/><path d="M12 0l5 17-6-5z" fill="#1b7bc0"/>`],
            ['Gauge', `<path d="M0 13a9 8 0 0 1 18 0h-4a5 5 0 0 0-10 0z" ${b}/><path d="M0 13a9 8 0 0 1 6-7.500l2 3A5 5 0 0 0 4 13z" ${w}/><path d="M8 13l5-6" stroke="#333" stroke-width="2"/>`],
            ['Card', `<path d="M1 3h16v12H1z" fill="#fff" stroke="#777" stroke-width="1.300"/><text x="2.500" y="12.500" font-size="8" font-weight="600" fill="#2180c8">123</text>`],
            ['Multi-row card', `<path d="M1 1h16v16H1z" fill="#fff" stroke="#777" stroke-width="1.300"/><path d="M4 4v4M4 10v4" stroke="#777"/><path d="M6 5h8M6 7.500h5M6 11h8M6 13.500h5" stroke="#2180c8" stroke-width="1.300"/>`],
            ['KPI', `<path d="M1 2h16v14H1z" fill="#fff" stroke="#777" stroke-width="1.300"/><path d="M3 10l3-5 3 5z" fill="#31a04f"/><path d="M10 5h6l-3 5z" fill="#d13438"/><path d="M4 13h9" stroke="#777"/>`],
            ['Slicer', `<path d="M9 16H1V1h16v7M1 4h16" ${w}/><path d="M4 7h3v3H4zM4 12h3v3H4z" ${g}/>` + funnel],
            ['Table', `<path d="M1 1h16v16H1zM1 4h16M1 8h16M1 12.500h16M6.500 4v13M11.500 4v13" ${w}/>`],
            ['Matrix', `<path d="M1 1h16v16H1z" ${w}/><path d="M12 4h5v13H1v-4h5V9h6z" fill="#7db5ea"/><path d="M1 4h16M1 8.500h11M6.500 4v9M11.500 4v5" stroke="#555" stroke-width="1.200"/><path d="M1 12.500h16M6.500 13v4M11.500 9v8M12 8.500h5" stroke="#2180c8" stroke-width="1.200"/>`, true],
            ['R script visual', '<text x="4" y="15" font-size="16" font-weight="700" fill="#2180c8">R</text>'],
            ['Python visual', '<text x="-1" y="14" font-size="16" font-weight="600" fill="#2180c8">Py</text>'],
            ['Key influencers', axis + `<path d="M1 4h12M1 8.500h10M1 12.500h6" stroke="#555"/><circle cx="15" cy="4" r="2" ${b}/><circle cx="11" cy="8.500" r="1.500" fill="#555"/><circle cx="7" cy="12.500" r="1.500" fill="#555"/>`],
            ['Decomposition tree', `<path d="M6 9h5M9 3v12M9 3h3M9 15h3" stroke="#555" fill="none"/><path d="M0 7h6v4H0zM11 1h6v4h-6zM11 7h6v4h-6zM11 13h6v4h-6z" ${b}/>`],
            ['Q&A', `<path d="M1 2h16v10H8l-4 4v-4H1z" fill="#fff" stroke="#2180c8" stroke-width="1.300"/>`],
            ['Smart narrative', `<path d="M4 5V1h8l4 4v12H4v-6M12 1v4h4" ${w}/><circle cx="3.500" cy="7.500" r="2" fill="#2180c8"/><path d="M7 8h5M7 11.500h7" stroke="#7db5ea" stroke-width="1.300"/>`],
            ['Metrics', `<path d="M4 1h10v6q-1 4-5 5-4-1-5-5zM4 3H1q0 5 4 6M14 3h3q0 5-4 6M9 12v4" ${w}/><path d="M5 1h8v3H5zM5 14h8v3H5z" ${b}/>`],
            ['Paginated report', `<path d="M2 0h9l5 5v13H2zM11 0v5h5" ${w}/><path d="M4 11h2v5H4zM8 13h2v3H8zM12 9h2v7h-2z" fill="#333"/>`],
            ['Card (new)', `<path d="M2 4h15v11H2z" fill="#fff" stroke="#777" stroke-width="1.300"/><text x="4" y="13" font-size="8" font-weight="600" fill="#2180c8">123</text>` + bolt],
            ['Slicer (new)', `<path d="M9 1h7v7H9zM2 11h6v6H2z" ${g}/><path d="M4 6h5v5H4z" ${b}/>` + bolt + funnel],
            ['ArcGIS Maps', `<path d="M2 2h15v15H2z" fill="#b9dcf5" stroke="#2180c8" stroke-width="1.300"/><path d="M8 3h8l-4 5 2 4-6 4-5-2 5-5z" fill="#fff"/><path d="M0 0h6v5l-3 4-3-4z" fill="#d9640f"/><circle cx="3" cy="3" r="1" fill="#fff"/><circle cx="15" cy="15" r="3" fill="#d9640f"/><circle cx="16" cy="10" r="1.500" fill="#d9640f"/>`],
            ['Power Apps', `<path d="M6 1h6l5.500 8-5.500 8H6L.500 9zM3.500 5 12 17M14.500 5 6 17M6 1l8.500 12M12 1 3.500 13" fill="#fff" stroke="#96308f" stroke-width="1.300"/>`],
            ['Power Automate', `<path d="M1 1.500h11l5.500 7.500-5.500 7.500H1L6.500 9zM6.500 9h6M12 1.500 3 16.500M15 5 7 16.500" fill="#fff" stroke="#2377ea" stroke-width="1.300"/>`]
        ];
        document.getElementById('vizGrid').innerHTML = visuals.map(([name, shapes, on]) => `
            <button class="h-7 flex items-center justify-center" title="${name}">
                <span class="size-6 flex items-center justify-center ${on ? 'border-2 border-[#605e5c] bg-white' : ''}"><svg class="w-[18px] h-[18px] shrink-0" viewBox="0 0 18 18">${shapes}</svg></span>
            </button>
        `).join('');

        // Field wells
        const wells = [['Rows', ['Student', 'Subject']], ['Columns', ['Attribute']], ['Values', ['First Value']]];
        document.getElementById('fieldWells').innerHTML = wells.map(([title, fields]) => `
            <h3 class="pl-2 mt-[6px] leading-5">${title}</h3>
            <div class="mt-[3px] mr-px border border-dashed border-[#b8b6b4] bg-white px-[2px] pt-1 pb-[11px] flex flex-col gap-[2px]">
                ${fields.map(f => `
                    <div class="h-[23px] border border-[#c8c6c4] bg-[#e9e8e6] flex items-center pl-1 pr-[3px]">
                        <span class="flex-1">${f}</span>
                        <button aria-label="${f} options"><svg class="w-3 h-3 mr-[6px] block"><use href="#chev" /></svg></button>
                        <button aria-label="Remove ${f}"><svg class="w-[9px] h-[9px] block"><use href="#cross" /></svg></button>
                    </div>
                `).join('')}
            </div>
        `).join('');

        // Field list
        const fields = [['Attribute', true], ['Student', true], ['Subject', true], ['Teacher', false], ['Value', true]];
        document.getElementById('fieldList').innerHTML = fields.map(([name, on]) => `
            <li class="h-6"><label class="h-full flex items-center">
                <span class="relative size-3">
                    <input type="checkbox" ${on ? 'checked' : ''} class="appearance-none block size-3 rounded-[2px] border border-[#8a8886] bg-white checked:bg-[#136c5a] checked:border-[#136c5a]">
                    ${on ? '<svg class="absolute inset-0 w-3 h-3" viewBox="0 0 12 12"><path d="M2.500 6 5 8.500l4.500-5" fill="none" stroke="#fff" stroke-width="1.200" /></svg>' : ''}
                </span>
                <span class="pl-[26px]">${name}</span>
            </label></li>
        `).join('');
    </script>
</body>
</html>
